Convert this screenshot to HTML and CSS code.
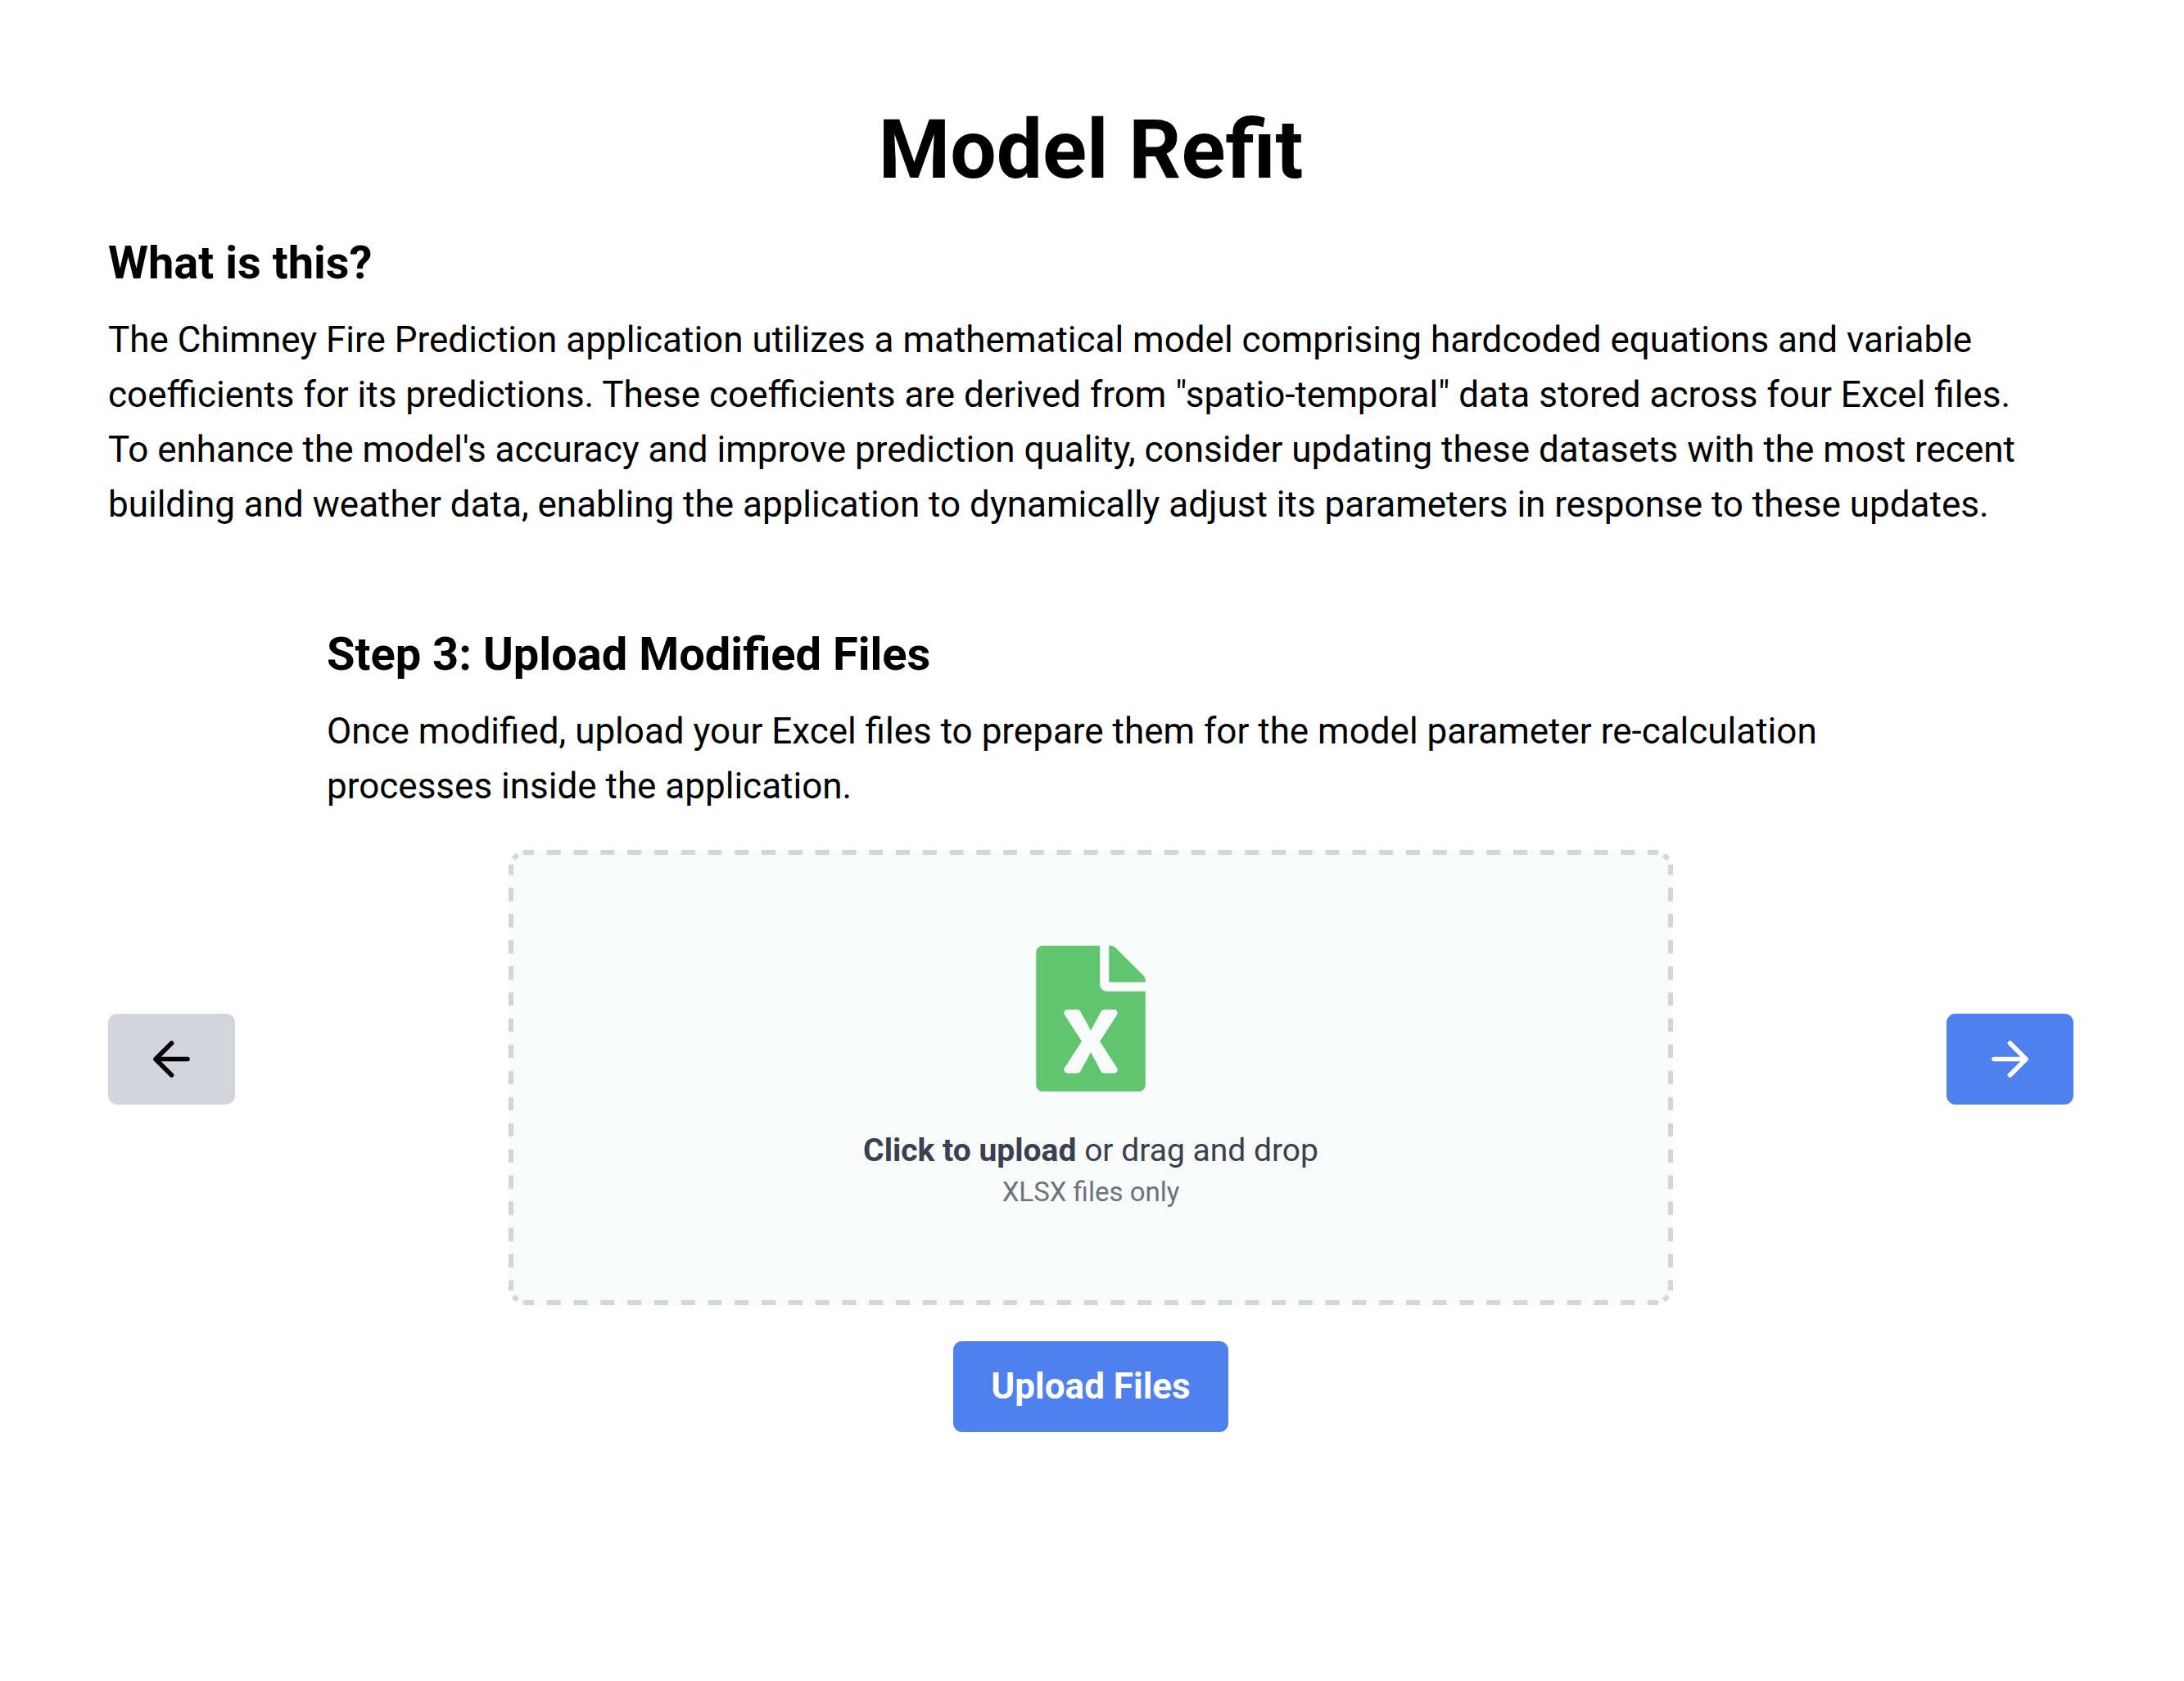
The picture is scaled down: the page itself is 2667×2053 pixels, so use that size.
FILE: index.html
```html
<!DOCTYPE html>
<html lang="en">
<head>
  <meta charset="utf-8">
  <meta name="viewport" content="width=device-width, initial-scale=1">
  <title>Model Refit</title>
  <link rel="stylesheet" href="styles.css">
</head>
<body>
  <main class="page">
    <h1 class="page-title">Model Refit</h1>

    <section class="intro">
      <h2 class="section-title">What is this?</h2>
      <p class="text">The Chimney Fire Prediction application utilizes a mathematical model comprising hardcoded equations and variable coefficients for its predictions. These coefficients are derived from "spatio-temporal" data stored across four Excel files. To&nbsp;enhance the model's accuracy and improve prediction quality, consider updating these datasets with the most recent building and weather data, enabling the application to dynamically adjust its parameters in response to these updates.</p>
    </section>

    <section class="step">
      <h2 class="section-title step-title">Step 3: Upload Modified Files</h2>

      <button class="button button-previous" type="button" aria-label="Previous step">
        <svg class="arrow" viewBox="0 0 24 24" aria-hidden="true"><path d="M19 12H5M12 19l-7-7 7-7"/></svg>
      </button>

      <form class="step-body">
        <p class="text">Once modified, upload your Excel files to prepare them for the model parameter re-calculation processes inside the application.</p>

        <label class="dropzone" for="files">
          <svg class="dashes" aria-hidden="true">
            <line x1="0" y1="0" x2="100%" y2="0" pathLength="1395" transform="translate(0 -15)"/>
            <line x1="0" y1="100%" x2="100%" y2="100%" pathLength="1395" transform="translate(0 15)"/>
            <line x1="0" y1="0" x2="0" y2="100%" pathLength="537" transform="translate(-15 0)"/>
            <line x1="100%" y1="0" x2="100%" y2="100%" pathLength="537" transform="translate(15 0)"/>
            <svg class="corner"><path d="M-12 -7L-7 -12"/></svg>
            <svg class="corner" x="100%"><path d="M12 -7L7 -12"/></svg>
            <svg class="corner" y="100%"><path d="M-12 7L-7 12"/></svg>
            <svg class="corner" x="100%" y="100%"><path d="M12 7L7 12"/></svg>
          </svg>
          <svg class="file-icon" viewBox="0 0 384 512" aria-hidden="true"><path d="M224 136V0H24C10.700 0 0 10.700 0 24v464c0 13.300 10.700 24 24 24h336c13.300 0 24-10.700 24-24V160H248c-13.200 0-24-10.800-24-24zm60.100 106.500L224 336l60.100 93.500c5.100 8-.6 18.500-10.100 18.500h-34.900c-4.400 0-8.500-2.400-10.600-6.300C208.900 405.500 192 373 192 373c-6.400 14.800-10 20-36.600 68.800-2.100 3.900-6.100 6.300-10.500 6.300H110c-9.500 0-15.200-10.500-10.100-18.500l60.300-93.500-60.300-93.500c-5.200-8 .6-18.500 10.100-18.500h34.800c4.400 0 8.500 2.400 10.600 6.300 26.100 48.800 20 33.600 36.600 68.500 0 0 6.100-11.700 36.600-68.500 2.100-3.900 6.200-6.300 10.600-6.300H274c9.500-.1 15.200 10.400 10.100 18.400zM384 121.900v6.100H256V0h6.100c6.400 0 12.500 2.500 17 7l97.900 98c4.500 4.500 7 10.600 7 16.900z"/></svg>
          <span class="dropzone-text"><strong>Click to upload</strong> or drag and drop</span>
          <span class="dropzone-hint">XLSX files only</span>
          <input class="file-input" id="files" type="file" accept=".xlsx" multiple>
        </label>

        <button class="button button-upload" type="submit">Upload Files</button>
      </form>

      <button class="button button-next" type="button" aria-label="Next step">
        <svg class="arrow" viewBox="0 0 24 24" aria-hidden="true"><path d="M5 12h14M12 5l7 7-7 7"/></svg>
      </button>
    </section>
  </main>
</body>
</html>
```
FILE: styles.css
```css
* {
  box-sizing: border-box;
  margin: 0;
}

body {
  background: #fff;
  color: #000;
  font-family: Roboto, "Liberation Sans", sans-serif;
  font-size: 44px;
  line-height: 67px;
}

.page {
  padding: 127px 135px 127px 132px;
}

.page-title {
  font-size: 100px;
  line-height: 111px;
  font-weight: 700;
  text-align: center;
}

.intro {
  margin-top: 44px;
}

.section-title {
  font-size: 56px;
  line-height: 78px;
  font-weight: 700;
}

.text {
  margin-top: 22px;
}

.step {
  display: grid;
  grid-template-columns: auto 1fr auto;
  column-gap: 112px;
  align-items: center;
  margin-top: 110px;
}

.step-title {
  grid-column: 2;
}

.button-previous {
  grid-column: 1;
}

.step-body {
  display: flex;
  flex-direction: column;
}

.button {
  display: flex;
  align-items: center;
  justify-content: center;
  padding: 22px 44px;
  border: 0;
  border-radius: 11px;
  background: #4f81ee;
  color: #fff;
  font: inherit;
  font-weight: 700;
  cursor: pointer;
}

.button-previous {
  background: #d3d5dc;
  color: #000;
}

.button-upload {
  align-self: center;
  margin-top: 44px;
  padding: 22px 46px;
}

.arrow {
  width: 67px;
  height: 67px;
  fill: none;
  stroke: currentColor;
  stroke-width: 2;
  stroke-linecap: round;
  stroke-linejoin: round;
}

.dropzone {
  position: relative;
  display: flex;
  flex-direction: column;
  align-items: center;
  margin: 44px 222px 0;
  padding: 117px 44px 116px;
  border-radius: 22px;
  background: #f9fafa;
  cursor: pointer;
}

.dashes {
  position: absolute;
  top: 18px;
  left: 18px;
  width: calc(100% - 36px);
  height: calc(100% - 36px);
  overflow: visible;
  fill: none;
  stroke: #d3d5dc;
  stroke-width: 6;
}

.dashes line {
  stroke-dasharray: 17 16;
  stroke-dashoffset: 4;
}

.corner {
  overflow: visible;
}

.file-icon {
  width: 134px;
  height: 178px;
  margin-bottom: 44px;
  fill: #61c46e;
}

.dropzone-text {
  color: #374151;
  font-size: 39px;
  line-height: 56px;
}

.dropzone-hint {
  color: #6b7280;
  font-size: 33px;
  line-height: 45px;
}

.file-input {
  position: absolute;
  width: 1px;
  height: 1px;
  opacity: 0;
}
```
